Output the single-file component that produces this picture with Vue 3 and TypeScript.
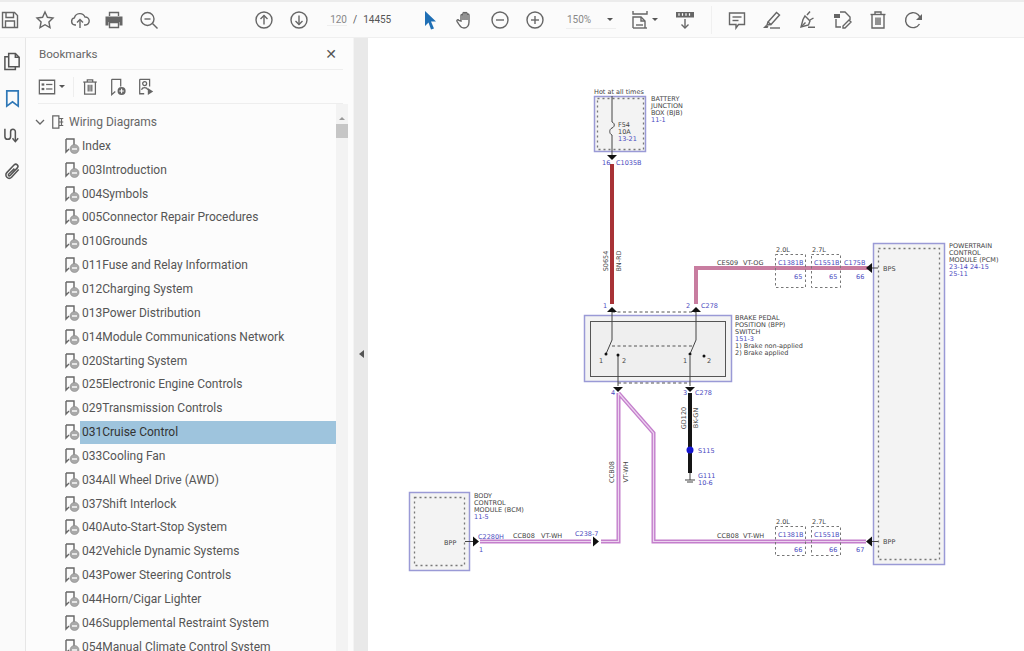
<script setup lang="ts">
// icon = list of path strings, a leading "!" means filled, "~" means knocked out in white
type Icon = string[];

const ic: Record<string, Icon> = {
  save: ['M2.5 2.5h12l3 3v12h-15z', 'M6 2.5v5h7.5v-5', 'M5.5 17.5v-6.5h9v6.5'],
  star: ['M10 2l2.4 5.3 5.6.7-4.1 3.9 1.1 5.7-5-2.9-5 2.9 1.1-5.7L2 8l5.600-.7z'],
  upload: ['M6 15H5a3.6 3.6 0 0 1-.6-7.1A5.6 5.6 0 0 1 15 7a3.9 3.9 0 0 1 .4 8H14', 'M10 18V10', 'M7 12.5l3-3 3 3'],
  print: ['M5.5 6V2.5h9V6', '!M1.5 6.5h17v9h-3v-3.5h-11v3.5h-3z', 'M5.5 12.5h9v5h-9z'],
  zoomOut: ['M8.5 2.5a6.5 6.5 0 1 0 0 13 6.5 6.5 0 0 0 0-13z', 'M5.5 9h6', 'M13.5 13.5l5 5'],
  up: ['M10 2a8 8 0 1 0 0 16 8 8 0 0 0 0-16z', 'M10 14.5v-9', 'M6.5 9L10 5.5 13.5 9'],
  down: ['M10 2a8 8 0 1 0 0 16 8 8 0 0 0 0-16z', 'M10 5.5v9', 'M6.5 11l3.5 3.5 3.5-3.5'],
  hand: ['M6 11V5.5a1 1 0 0 1 2 0V10V3.5a1 1 0 0 1 2 0V10V3.5a1 1 0 0 1 2 0V10V5a1 1 0 0 1 2 0v7c0 3.5-2 6-5 6-2.5 0-3.5-1-5-3.5l-2-3.2c-.6-1.2 1-2 1.800-1z'],
  minus: ['M10 2a8 8 0 1 0 0 16 8 8 0 0 0 0-16z', 'M6 10h8'],
  plus: ['M10 2a8 8 0 1 0 0 16 8 8 0 0 0 0-16z', 'M6 10h8', 'M10 6v8'],
  fit: ['M3 1v3h14V1', 'M3 18V7h8l4 4v7', 'M11 7v4h4', 'M3 18h14', 'M6 15h7'],
  ruler: ['!M1 2h18v5.500H1z', '~M4 3.200v2.500M7.500 3.200v2.500M11 3.200v2.500M14.500 3.200v2.500', 'M10 9v9', 'M6.500 14.500L10 18l3.500-3.500'],
  comment: ['M2.5 3h15v11.5h-6L9 18v-3.5H2.5z', 'M5.5 7h9', 'M5.5 10.5h6'],
  highlight: ['M6 12L14.5 2.5l3 2.5L9 14.5z', 'M6 12l-1 3 4-.5', '!M1 18l3-3 2.5 1.5-1 1.500z', 'M8 18h10'],
  pen: ['M8 6l5 5-1.500 4-7.500 2 2-7.500z', 'M4.500 16.500l4-4', 'M10 5l3-3.500', 'M13 10l3.500-2', '!M11 16.500h7v1.500h-7z'],
  stamp: ['!M1 4h6v4H1z', 'M7 2h5l5 5v3', 'M3 9v8h5', 'M10 16l6-6 2 2-6 6h-2z'],
  trash: ['M2.5 4.5h15', 'M7 4.5V2h6v2.5', 'M4 4.5V18h12V4.5', 'M8 7.5v7.5', 'M10 7.5v7.5', 'M12 7.5v7.5'],
  rotate: ['M16.5 14A7.5 7.5 0 1 1 15 4.5l2 2.5', '!M19 4v6h-6z'],
  list: ['M1.5 2.5h17v15h-17z', '!M4 6h3v2.5H4z', '!M4 11h3v2.5H4z', 'M9 7.2h7', 'M9 12.2h7'],
  addMark: ['M3 1.500h10v8', 'M3 1.500v17l4-3.500', '!M14 10a4.500 4.500 0 1 0 0 9 4.500 4.500 0 0 0 0-9z', '~M11.500 14.500h5M14 12v5'],
  runMark: ['M3 1.5h11v8', 'M3 1.5v16h5', 'M8.5 4a2.2 2.2 0 1 0 0 4.4A2.2 2.2 0 0 0 8.5 4z', 'M5 13c1-3 6-3 7 0', '!M12 11l6 4-6 4z'],
  pages: ['M6 1.5h7l4 4v10H6z', 'M13 1.5v4h4', 'M6 5H2v13.5h11v-3'],
  mark: ['M4 2h12v16l-6-4.5L4 18z'],
  sign: ['M2 4v8a3 3 0 0 0 6 0V7a2.5 2.5 0 0 1 5 0v10', 'M10 14l3 3.5 3-3.5'],
  clip: ['M16.5 8l-7.5 8a3.4 3.4 0 0 1-5-4.8L11.8 3a2.3 2.3 0 0 1 3.3 3.2l-7.6 8a1 1 0 0 1-1.6-1.4L12 7'],
};

const bookmarks = [
  'Index', '003Introduction', '004Symbols', '005Connector Repair Procedures', '010Grounds',
  '011Fuse and Relay Information', '012Charging System', '013Power Distribution',
  '014Module Communications Network', '020Starting System', '025Electronic Engine Controls',
  '029Transmission Controls', '031Cruise Control', '033Cooling Fan', '034All Wheel Drive (AWD)',
  '037Shift Interlock', '040Auto-Start-Stop System', '042Vehicle Dynamic Systems',
  '043Power Steering Controls', '044Horn/Cigar Lighter', '046Supplemental Restraint System',
  '054Manual Climate Control System',
];

const kind = (d: string) => ({ solid: d[0] === '!', knock: d[0] === '~' });
const strip = (d: string) => d.replace(/^[!~]/, '');

const dark = [
  { x: 594, y: 93, t: 'Hot at all times' },
  { x: 651, y: 100.5, t: 'BATTERY' }, { x: 651, y: 107.5, t: 'JUNCTION' }, { x: 651, y: 114.5, t: 'BOX (BJB)' },
  { x: 618, y: 126, t: 'F54' }, { x: 618, y: 133, t: '10A' },
  { x: 735, y: 319, t: 'BRAKE PEDAL' }, { x: 735, y: 326, t: 'POSITION (BPP)' }, { x: 735, y: 333, t: 'SWITCH' },
  { x: 735, y: 347, t: '1) Brake non-applied' }, { x: 735, y: 354, t: '2) Brake applied' },
  { x: 717, y: 264, t: 'CES09' }, { x: 743, y: 264, t: 'VT-OG' },
  { x: 776, y: 251, t: '2.0L' }, { x: 812, y: 251, t: '2.7L' }, { x: 883, y: 270, t: 'BPS' },
  { x: 949, y: 247, t: 'POWERTRAIN' }, { x: 949, y: 254, t: 'CONTROL' }, { x: 949, y: 261, t: 'MODULE (PCM)' },
  { x: 474, y: 497, t: 'BODY' }, { x: 474, y: 504, t: 'CONTROL' }, { x: 474, y: 511, t: 'MODULE (BCM)' },
  { x: 444, y: 544, t: 'BPP' }, { x: 513, y: 537, t: 'CCB08' }, { x: 541, y: 537, t: 'VT-WH' },
  { x: 717, y: 537, t: 'CCB08' }, { x: 743, y: 537, t: 'VT-WH' },
  { x: 776, y: 523, t: '2.0L' }, { x: 812, y: 523, t: '2.7L' }, { x: 883, y: 543, t: 'BPP' },
  { x: 599, y: 362, t: '1' }, { x: 622, y: 362, t: '2' }, { x: 683, y: 362, t: '1' }, { x: 707, y: 362, t: '2' },
];

const blue = [
  { x: 651, y: 121.5, t: '11-1' }, { x: 618, y: 140, t: '13-21' }, { x: 602, y: 164, t: '16' }, { x: 616, y: 164, t: 'C1035B' },
  { x: 603, y: 307, t: '1' }, { x: 686, y: 307, t: '2' }, { x: 701, y: 307, t: 'C278' },
  { x: 735, y: 340, t: '151-3' }, { x: 611, y: 394, t: '4' }, { x: 683, y: 394, t: '3' }, { x: 695, y: 394, t: 'C278' },
  { x: 698, y: 452, t: 'S115' }, { x: 698, y: 477, t: 'G111' }, { x: 698, y: 484, t: '10-6' },
  { x: 778, y: 264, t: 'C1381B' }, { x: 814, y: 264, t: 'C1551B' }, { x: 844, y: 264, t: 'C175B' },
  { x: 794, y: 278, t: '65' }, { x: 829, y: 278, t: '65' }, { x: 856, y: 278, t: '66' },
  { x: 949, y: 268, t: '23-14 24-15' }, { x: 949, y: 275, t: '25-11' },
  { x: 474, y: 518, t: '11-5' }, { x: 478, y: 538, t: 'C2280H' }, { x: 479, y: 551, t: '1' }, { x: 575, y: 535, t: 'C238-7' },
  { x: 778, y: 536, t: 'C1381B' }, { x: 814, y: 536, t: 'C1551B' },
  { x: 794, y: 551, t: '66' }, { x: 829, y: 551, t: '66' }, { x: 856, y: 551, t: '67' },
];

const vertical = [
  { x: 608, y: 261, t: 'S0654' }, { x: 621, y: 261, t: 'BN-RD' },
  { x: 686, y: 418, t: 'GD120' }, { x: 698, y: 418, t: 'BK-GN' },
  { x: 614, y: 472, t: 'CCB08' }, { x: 628, y: 472, t: 'VT-WH' },
];
</script>

<template>
  <div class="page">
    <header class="toolbar">
      <div class="group first">
        <svg v-for="n in ['save', 'star', 'upload', 'print', 'zoomOut']" :key="n" class="icon" viewBox="0 0 20 20">
          <path v-for="d in ic[n]" :key="d" :d="strip(d)" :class="kind(d)" />
        </svg>
      </div>
      <div class="group nav">
        <svg v-for="n in ['up', 'down']" :key="n" class="icon" viewBox="0 0 20 20">
          <path v-for="d in ic[n]" :key="d" :d="strip(d)" :class="kind(d)" />
        </svg>
      </div>
      <div class="pager"><span class="pg-cur">120</span><span>/</span><span>14455</span></div>
      <div class="group tools">
        <svg class="icon" viewBox="0 0 20 20"><path class="cursor" d="M5 1l11 10.500h-5l3 7-3 1-2.500-7L5 16z" /></svg>
        <svg v-for="n in ['hand', 'minus', 'plus']" :key="n" class="icon" viewBox="0 0 20 20">
          <path v-for="d in ic[n]" :key="d" :d="strip(d)" :class="kind(d)" />
        </svg>
      </div>
      <div class="zoom-box"><span>150%</span><i class="caret"></i></div>
      <svg class="icon fit" viewBox="0 0 20 20"><path v-for="d in ic.fit" :key="d" :d="d" /></svg>
      <i class="caret fit-caret"></i>
      <svg class="icon ruler" viewBox="0 0 20 20">
        <path v-for="d in ic.ruler" :key="d" :d="strip(d)" :class="kind(d)" />
      </svg>
      <div class="vsep"></div>
      <div class="group annotate">
        <svg v-for="n in ['comment', 'highlight', 'pen', 'stamp', 'trash', 'rotate']" :key="n" class="icon" viewBox="0 0 20 20">
          <path v-for="d in ic[n]" :key="d" :d="strip(d)" :class="kind(d)" />
        </svg>
      </div>
    </header>

    <div class="body">
      <nav class="rail">
        <svg v-for="n in ['pages', 'mark', 'sign', 'clip']" :key="n" class="icon" :class="{ active: n === 'mark' }" viewBox="0 0 20 20">
          <path v-for="d in ic[n]" :key="d" :d="d" />
        </svg>
      </nav>

      <aside class="panel">
        <div class="panel-head"><span>Bookmarks</span><b class="close">✕</b></div>
        <div class="panel-tools">
          <svg class="icon" viewBox="0 0 20 20">
            <path v-for="d in ic.list" :key="d" :d="strip(d)" :class="kind(d)" />
          </svg>
          <i class="caret"></i>
          <div class="tsep"></div>
          <svg v-for="n in ['trash', 'addMark', 'runMark']" :key="n" class="icon" viewBox="0 0 20 20">
            <path v-for="d in ic[n]" :key="d" :d="strip(d)" :class="kind(d)" />
          </svg>
        </div>
        <div class="tree-wrap">
          <div class="tree">
            <div class="root">
              <svg class="chev" viewBox="0 0 10 10"><path d="M1 3l4 4 4-4" /></svg>
              <svg class="root-icon" viewBox="0 0 16 16"><path d="M2 1h7v14H2z M9 4h5 M9 8h5 M9 12h5 M12 4v8" /></svg>
              <span>Wiring Diagrams</span>
            </div>
            <div v-for="b in bookmarks" :key="b" class="row" :class="{ selected: b === '031Cruise Control' }">
              <svg class="row-icon" viewBox="0 0 16 16">
                <path d="M2 1h8v8 M2 1v13l3-3" />
                <circle cx="10.500" cy="11" r="4.500" />
                <path class="dash" d="M8 11h5" />
              </svg>
              <span>{{ b }}</span>
            </div>
          </div>
          <div class="scrollbar"><i class="arrow"></i><div class="thumb"></div></div>
        </div>
      </aside>

      <div class="splitter"><i class="handle"></i></div>

      <main class="doc">
        <svg class="diagram" viewBox="368 38 656 613">
          <!-- module boxes -->
          <g class="outer">
            <rect x="594.500" y="96.500" width="51" height="55" />
            <rect x="584.500" y="315.500" width="147" height="66" />
            <rect x="409.500" y="492.500" width="60" height="78" />
            <rect x="873.500" y="243.500" width="71" height="321" />
          </g>
          <g class="inner-dash">
            <rect x="597.500" y="98.500" width="46" height="51" />
            <rect x="414.500" y="497.500" width="50" height="68" />
            <rect x="878.500" y="248.500" width="61" height="311" />
          </g>
          <rect class="inner" x="590.500" y="321.500" width="135" height="55" />

          <!-- wires -->
          <path class="w-red" d="M612 164V304" />
          <path class="w-pink" d="M696 304V268H868" />
          <path class="w-black" d="M690 393V473" />
          <g class="w-violet">
            <path d="M480 541.500H591 M601 541.500H618.500V393 M618.500 393L653.500 433V541.500H866" />
          </g>
          <g class="w-violet-in">
            <path d="M480 541.500H591 M601 541.500H618.500V393 M618.500 393L653.500 433V541.500H866" />
          </g>

          <!-- connector outlines, the wires show through -->
          <g class="conn">
            <rect x="775.500" y="254.500" width="30" height="33" />
            <rect x="811.500" y="254.500" width="29" height="33" />
            <rect x="775.500" y="526.500" width="30" height="29" />
            <rect x="811.500" y="526.500" width="29" height="29" />
          </g>

          <!-- thin lines and the switch -->
          <g class="thin">
            <path d="M612 96V122c3 1 3 5 0 6s-3 6 0 7V155" />
            <path d="M612 312V340L606 354" />
            <path d="M696 312V340L690 354" />
            <path d="M618 356V386" />
            <path d="M690 356V386" />
            <path d="M870 268H878" />
            <path d="M870 541.500H878" />
            <path d="M465 541.500H474" />
            <path d="M690 473V480 M685 480H695 M687 482H693" />
          </g>
          <g class="dashed">
            <path d="M612 312H696" />
            <path d="M618 383H690" />
            <path d="M612 346H694" />
          </g>

          <!-- arrow heads and dots -->
          <g class="heads">
            <path d="M607 155h10l-5 5z" />
            <path d="M607 312h10l-5-5z" />
            <path d="M691 312h10l-5-5z" />
            <path d="M613 387h10l-5 5z" />
            <path d="M685 387h10l-5 5z" />
            <path d="M866 268l6-5v10z" />
            <path d="M866 541.500l6-5v10z" />
            <path d="M479 541.500l-6-5v10z" />
            <path d="M599 541.500l-6-5v10z" />
            <circle cx="606" cy="354" r="1.500" />
            <circle cx="618" cy="355" r="1.500" />
            <circle cx="690" cy="354" r="1.500" />
            <circle cx="704" cy="356" r="1.500" />
          </g>
          <circle class="splice" cx="690" cy="450" r="3.500" />

          <!-- labels -->
          <text v-for="l in dark" :key="l.t + l.x + l.y" class="lbl" :x="l.x" :y="l.y + 0.8">{{ l.t }}</text>
          <text v-for="l in blue" :key="l.t + l.x + l.y" class="lbl blue" :x="l.x" :y="l.y + 0.8">{{ l.t }}</text>
          <text v-for="l in vertical" :key="l.t" class="lbl mid" :transform="`translate(${l.x} ${l.y}) rotate(-90)`">{{ l.t }}</text>
        </svg>
      </main>
    </div>
  </div>
</template>

<style>
html, body {
  margin: 0;
  overflow: hidden;
}
</style>

<style scoped>
.page {
  width: 1024px;
  height: 651px;
  display: flex;
  flex-direction: column;
  overflow: hidden;
  font-family: Roboto, "Liberation Sans", sans-serif;
  color: #5a5a5a;
  background: #fff;
}

.icon {
  width: 20px;
  height: 20px;
  flex: none;
}
.icon path,
.row-icon path,
.root-icon path {
  fill: none;
  stroke: #666;
  stroke-width: 1.4;
}
.icon path.solid {
  fill: #666;
  stroke: none;
}
.icon path.knock {
  stroke: #fff;
  stroke-width: 1.2;
}
.icon path.cursor {
  fill: #1f6fb5;
  stroke: none;
}

/* top toolbar */
.toolbar {
  height: 35px;
  flex: none;
  display: flex;
  align-items: center;
  background: #fbfbfb;
  border-top: 2px solid #ececec;
  border-bottom: 1px solid #efefef;
  box-sizing: content-box;
}
.group {
  display: flex;
  align-items: center;
  flex: none;
}
.first {
  gap: 14.75px;
}
.nav {
  margin-left: 95px;
  gap: 15px;
}
.pager {
  width: 75px;
  margin-left: 18px;
  display: flex;
  gap: 6px;
  font-size: 10px;
  color: #555;
  flex: none;
}
.pg-cur {
  width: 20px;
  text-align: right;
  color: #888;
  border-bottom: 1px solid #eee;
}
.tools {
  margin-left: 18px;
  gap: 15px;
}
.zoom-box {
  width: 50px;
  margin-left: 21px;
  display: flex;
  align-items: center;
  justify-content: space-between;
  font-size: 10px;
  color: #888;
  border-bottom: 1px solid #eee;
  flex: none;
  padding: 3px 3px 3px 1px;
  box-sizing: border-box;
}
.caret {
  display: block;
  width: 0;
  height: 0;
  border-left: 3px solid transparent;
  border-right: 3px solid transparent;
  border-top: 3px solid #555;
  flex: none;
}
.fit {
  margin-left: 14px;
}
.fit-caret {
  margin-left: 2px;
}
.ruler {
  margin-left: 17px;
}
.vsep {
  width: 1px;
  height: 28px;
  background: #f0f0f0;
  margin-left: 16px;
  flex: none;
}
.annotate {
  margin-left: 15px;
  gap: 15.200px;
}

.body {
  flex: 1;
  display: flex;
  min-height: 0;
}

/* left icon rail */
.rail {
  width: 26px;
  flex: none;
  display: flex;
  flex-direction: column;
  align-items: center;
  gap: 17.500px;
  padding-top: 14px;
  box-sizing: border-box;
  background: #fafafa;
  border-right: 1px solid #e6e6e6;
}
.rail .icon {
  width: 19px;
  height: 19px;
}
.rail .icon path {
  stroke: #555;
  stroke-width: 1.6;
}
.rail .active path {
  stroke: #2f78b7;
  stroke-width: 1.8;
}

/* bookmarks panel */
.panel {
  flex: 1;
  min-width: 0;
  display: flex;
  flex-direction: column;
  background: #fcfcfc;
}
.panel-head {
  height: 31px;
  margin: 0 10px 0 13px;
  display: flex;
  align-items: center;
  justify-content: space-between;
  font-size: 11.600px;
  color: #666;
  border-bottom: 1px solid #eeeeee;
  flex: none;
}
.close {
  font-size: 14px;
  color: #555;
  font-weight: 400;
  margin-right: 6px;
  font-family: "DejaVu Sans", sans-serif;
}
.panel-tools {
  height: 33px;
  margin: 0 10px 0 12px;
  display: flex;
  align-items: center;
  border-bottom: 1px solid #eeeeee;
  flex: none;
}
.panel-tools .icon {
  width: 18px;
  height: 18px;
  margin-right: 10px;
}
.panel-tools .icon:first-child {
  margin-right: 3px;
}
.tsep {
  width: 1px;
  height: 20px;
  background: #eee;
  margin: 0 7px 0 8px;
}
.tree-wrap {
  flex: 1;
  min-height: 0;
  display: flex;
  overflow: hidden;
}
.tree {
  flex: 1;
  min-width: 0;
  padding-top: 6px;
  color: #555;
  font-size: 12px;
}
.root {
  height: 24px;
  display: flex;
  align-items: center;
  padding-left: 9px;
  color: #666;
}
.chev {
  width: 10px;
  height: 10px;
  margin-right: 6px;
}
.chev path {
  fill: none;
  stroke: #666;
  stroke-width: 1.3;
}
.root-icon {
  width: 14px;
  height: 16px;
  margin-right: 4px;
}
.row {
  height: 23.850px;
  display: flex;
  align-items: center;
  padding-left: 38px;
  white-space: nowrap;
}
.row span {
  padding-left: 2px;
}
.row-icon {
  width: 16px;
  height: 16px;
  flex: none;
}
.row-icon circle {
  fill: #a9a9a9;
  stroke: #888;
  stroke-width: 0.6;
}
.row-icon path.dash {
  stroke: #fff;
}
.row.selected span {
  flex: 1;
  line-height: 23px;
  background: #9ec4dd;
  color: #333;
}
.scrollbar {
  width: 12px;
  margin-right: 5px;
  flex: none;
  background: #f3f3f3;
  padding-top: 13px;
  box-sizing: border-box;
  display: flex;
  flex-direction: column;
  align-items: center;
}
.arrow {
  display: block;
  width: 0;
  height: 0;
  border-left: 3px solid transparent;
  border-right: 3px solid transparent;
  border-bottom: 3px solid #999;
  margin-bottom: 4px;
}
.thumb {
  width: 12px;
  height: 14px;
  background: #c6c6c6;
}

/* splitter */
.splitter {
  width: 15px;
  flex: none;
  background: #e9e9e9;
  display: flex;
  align-items: center;
  justify-content: center;
  border-left: 1px solid #f4f4f4;
  box-sizing: border-box;
}
.handle {
  display: block;
  width: 0;
  height: 0;
  border-top: 4px solid transparent;
  border-bottom: 4px solid transparent;
  border-right: 5px solid #555;
  margin-top: 19px;
}

/* drawing page */
.doc {
  width: 656px;
  flex: none;
  background: #fff;
}
.diagram {
  display: block;
  width: 656px;
  height: 613px;
}
.outer rect {
  fill: #f3f3f3;
  stroke: #9a9ad6;
  stroke-width: 1.5;
}
.inner-dash rect {
  fill: none;
  stroke: #777;
  stroke-width: 1.300;
  stroke-dasharray: 2 3;
}
.inner {
  fill: #efefef;
  stroke: #555;
}
.conn rect {
  fill: none;
  stroke: #777;
  stroke-dasharray: 2.500 2.500;
}
.w-red,
.w-pink,
.w-black,
.w-violet path,
.w-violet-in path {
  fill: none;
}
.w-red {
  stroke: #a83236;
  stroke-width: 4;
}
.w-pink {
  stroke: #c87da0;
  stroke-width: 4;
}
.w-black {
  stroke: #151515;
  stroke-width: 4;
}
.w-violet path {
  stroke: #c47fcc;
  stroke-width: 4;
}
.w-violet-in path {
  stroke: #ecd3ef;
  stroke-width: 1.200;
}
.thin path {
  fill: none;
  stroke: #444;
  stroke-width: 1;
}
.dashed path {
  fill: none;
  stroke: #555;
  stroke-dasharray: 3 2.500;
}
.heads path,
.heads circle {
  fill: #111;
}
.splice {
  fill: #1414d0;
}
.lbl {
  font-family: "DejaVu Sans", sans-serif;
  font-size: 6.500px;
  fill: #444;
}
.lbl.blue {
  fill: #4a4ac0;
}
.lbl.mid {
  text-anchor: middle;
}
</style>
